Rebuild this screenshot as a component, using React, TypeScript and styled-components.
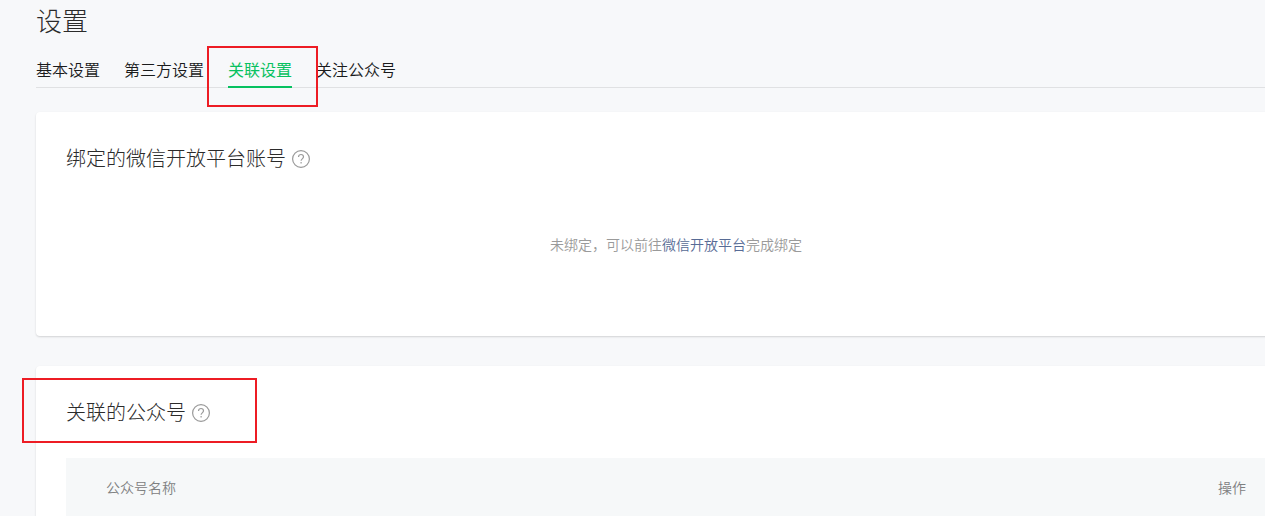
import styled, { createGlobalStyle } from 'styled-components';

const tabs = [
  { id: 1, name: '基本设置' },
  { id: 2, name: '第三方设置' },
  { id: 3, name: '关联设置' },
  { id: 4, name: '关注公众号' },
];

const HelpIcon: React.FC = () => {
  return (
    <HelpSvg viewBox="0 0 18 18">
      <circle cx="9" cy="9" r="8.4" />
      <path d="M6.5 7.1c0-1.7 1.1-2.6 2.5-2.6s2.5.9 2.5 2.3c0 2-2.4 2.1-2.4 4" />
      <path d="M9.1 12.1v1.4" />
    </HelpSvg>
  );
};

const App: React.FC = () => {
  const activeTab = 3;

  return (
    <>
      <GlobalStyle />
      <Page>
        <Title>设置</Title>
        <Tabs>
          {tabs.map(({ id, name }) => (
            <Tab key={id} $active={id === activeTab}>
              {name}
            </Tab>
          ))}
        </Tabs>
        <Card>
          <CardTitle>
            绑定的微信开放平台账号
            <HelpIcon />
          </CardTitle>
          <EmptyTip>
            未绑定，可以前往<a>微信开放平台</a>完成绑定
          </EmptyTip>
        </Card>
        <Card>
          <CardTitle>
            关联的公众号
            <HelpIcon />
          </CardTitle>
          <TableHead>
            <span>公众号名称</span>
            <span>操作</span>
          </TableHead>
        </Card>
        <Marker $left={207} $top={46} $width={111} $height={61} />
        <Marker $left={22} $top={378} $width={235} $height={65} />
      </Page>
    </>
  );
};
export default App;

const GlobalStyle = createGlobalStyle`
  * {
    box-sizing: border-box;
  }

  body {
    margin: 0;
    overflow: hidden;
    background: #f7f8fa;
    font-family: 'Noto Sans CJK SC', sans-serif;
    font-weight: 350;
  }
`;

const Page = styled.div`
  position: relative;
  width: 1316px;
  height: 516px;
  padding-left: 36px;
  overflow: hidden;
`;

const Title = styled.h2`
  margin: 0;
  height: 54px;
  padding-top: 2px;
  font-size: 26px;
  font-weight: 300;
  line-height: 36px;
  color: #2b2b2b;
`;

const Tabs = styled.div`
  display: flex;
  gap: 24px;
  height: 34px;
  margin-bottom: 24px;
  border-bottom: 1px solid #e0e1e3;
`;

const Tab = styled.div<{ $active: boolean }>`
  height: 34px;
  font-size: 16px;
  font-weight: ${({ $active }) => ($active ? 400 : 350)};
  line-height: 31px;
  white-space: nowrap;
  color: ${({ $active }) => ($active ? '#07c160' : '#1a1b1c')};
  border-bottom: 2px solid ${({ $active }) => ($active ? '#07c160' : 'transparent')};
`;

const Card = styled.div`
  height: 224px;
  margin-bottom: 30px;
  padding: 30px;
  background: #fff;
  border-radius: 4px;
  box-shadow: 0 1px 2px rgba(0, 0, 0, 0.15);
`;

const CardTitle = styled.h3`
  display: flex;
  align-items: center;
  gap: 6px;
  margin: 0;
  height: 32px;
  font-size: 20px;
  font-weight: 300;
  line-height: 32px;
  color: #2b2b2b;
`;

const HelpSvg = styled.svg`
  width: 18px;
  height: 18px;
  margin-top: 2px;
  fill: none;
  stroke: #9a9a9a;
  stroke-width: 1.2;
`;

const EmptyTip = styled.p`
  margin: 59px 0 0;
  font-size: 14px;
  line-height: 22px;
  text-align: center;
  color: #9a9a9a;

  a {
    color: #576b95;
  }
`;

const TableHead = styled.div`
  display: flex;
  justify-content: space-between;
  margin-top: 30px;
  padding: 0 40px;
  height: 60px;
  font-size: 14px;
  line-height: 58px;
  color: #7e8081;
  background: #f6f8f9;
`;

const Marker = styled.div<{
  $left: number;
  $top: number;
  $width: number;
  $height: number;
}>`
  position: absolute;
  left: ${({ $left }) => $left}px;
  top: ${({ $top }) => $top}px;
  width: ${({ $width }) => $width}px;
  height: ${({ $height }) => $height}px;
  border: 2px solid #ed1c24;
`;
